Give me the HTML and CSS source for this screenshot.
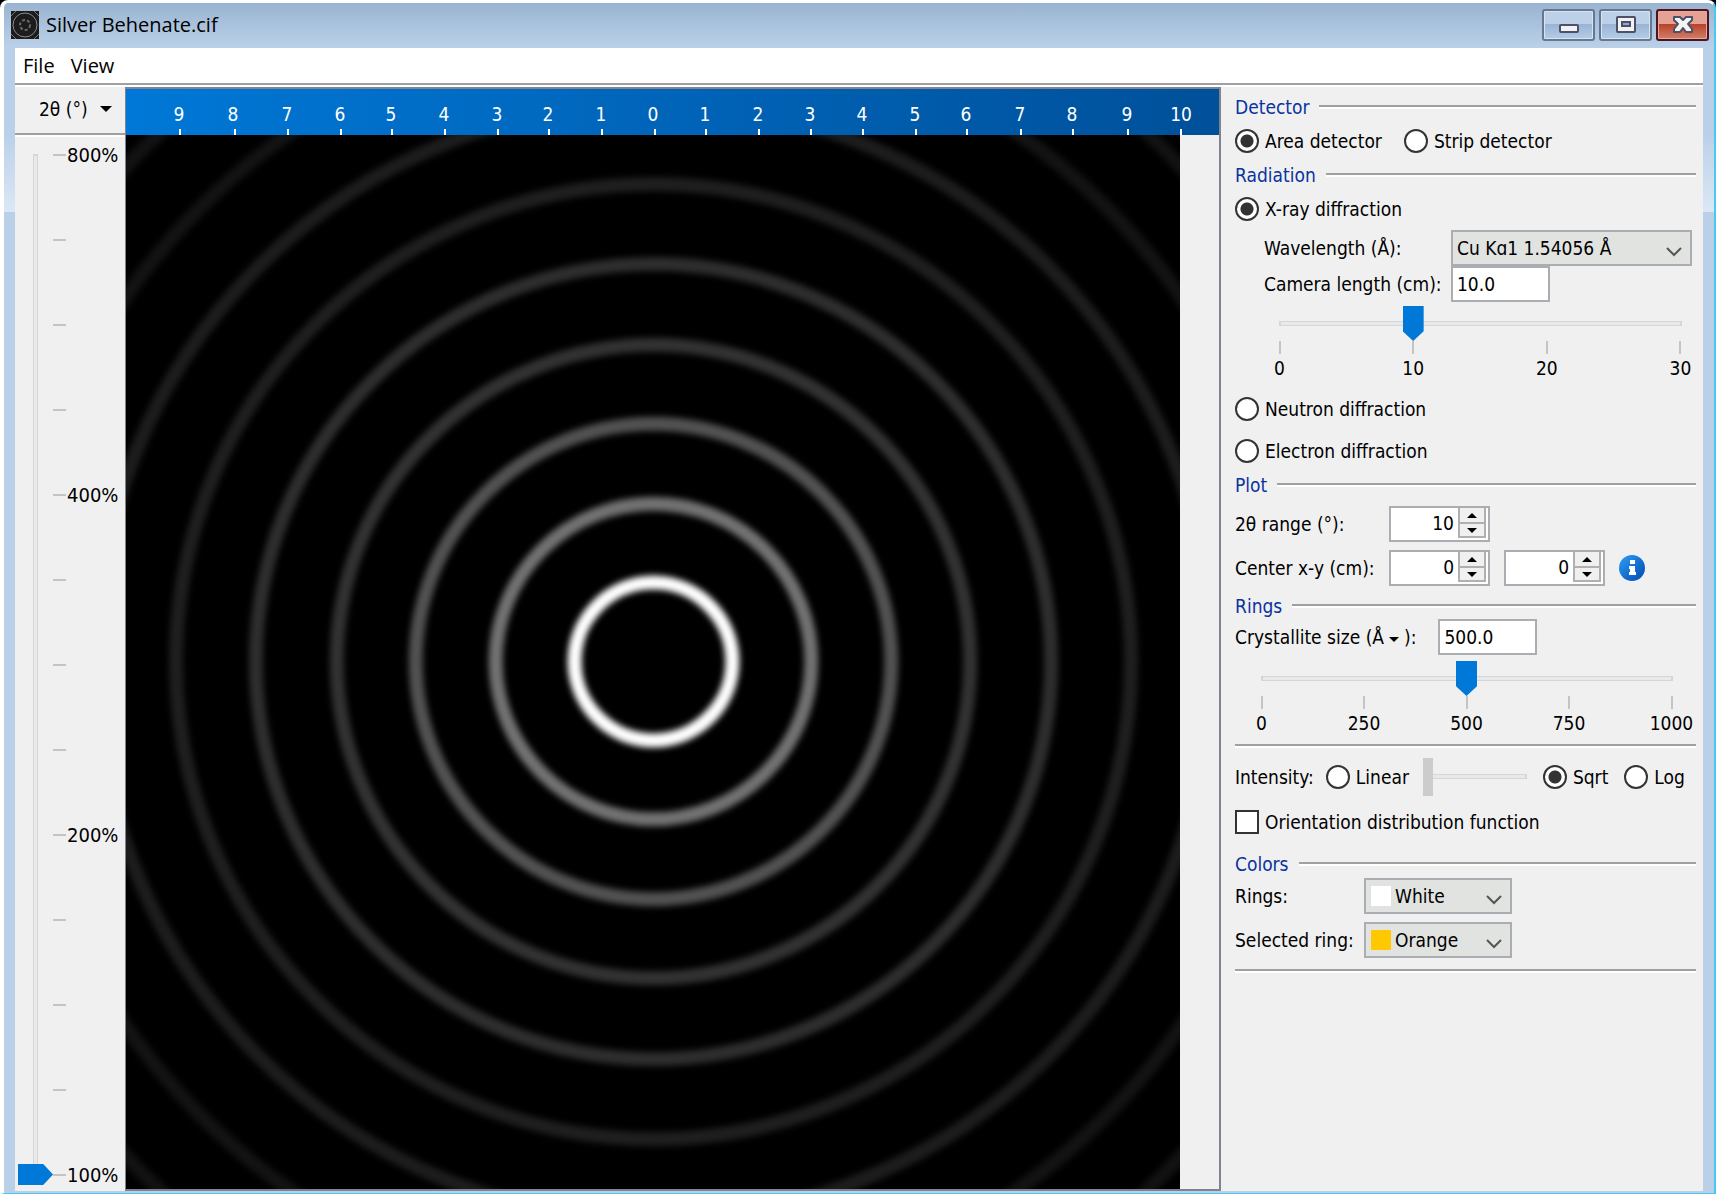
FILE: index.html
```
<!DOCTYPE html>
<html lang="en">

<head>
    <meta charset="UTF-8">
    <title>Silver Behenate.cif</title>

    <link rel="stylesheet" href="styles.css">
</head>

<body>
    <div class="window">
        <header class="titlebar">
            <svg class="app-icon" width="28" height="28" viewBox="0 0 28 28">
                <rect width="28" height="28" fill="#1c1c1c" />
                <circle cx="14" cy="14" r="12" fill="none" stroke="#8c8c8c" stroke-width="1" />
                <circle cx="14" cy="14" r="5" fill="none" stroke="#6a6a6a" stroke-width="2" stroke-dasharray="3 2" />
                <path d="M0 5L5 0M23 0L28 5M0 23L5 28M23 28L28 23" stroke="#777" />
            </svg>
            <h1>Silver Behenate.cif</h1>
            <div class="window-buttons">
                <button type="button" class="win-btn" aria-label="Minimize">
                    <svg width="20" height="18" viewBox="0 0 20 18">
                        <rect x="1" y="9" width="18" height="7" rx="1" fill="#f2f2f2" stroke="#4c5068" stroke-width="2" />
                    </svg>
                </button>
                <button type="button" class="win-btn" aria-label="Maximize">
                    <svg width="20" height="18" viewBox="0 0 20 18">
                        <rect x="1" y="1" width="18" height="15" rx="1" fill="#f2f2f2" stroke="#4c5068" stroke-width="2" />
                        <rect x="6" y="6" width="8" height="4" fill="#8fa9cc" stroke="#4c5068" stroke-width="2" />
                    </svg>
                </button>
                <button type="button" class="win-btn close" aria-label="Close">
                    <svg width="20" height="18" viewBox="0 0 20 18">
                        <path d="M1 1h6l3 3 3-3h6v3l-4 4 4 5v3h-6l-3-4-3 4H1v-3l4-5-4-4z" fill="#f4f4f4" stroke="#4c5068" stroke-width="2" stroke-linejoin="round" />
                    </svg>
                </button>
            </div>
        </header>

        <nav class="menubar">
            <button type="button">File</button>
            <button type="button">View</button>
        </nav>

        <main class="content">
            <div class="zoom-panel">
                <button type="button" class="units">2θ (°) <i class="arrow-down"></i></button>
                <div class="zoom-slider">
                    <input type="range" class="vertical" min="0" max="12" value="0" aria-label="Zoom">
                    <div class="zoom-scale">
                        <span>800%</span>
                        <span></span>
                        <span></span>
                        <span></span>
                        <span>400%</span>
                        <span></span>
                        <span></span>
                        <span></span>
                        <span>200%</span>
                        <span></span>
                        <span></span>
                        <span></span>
                        <span>100%</span>
                    </div>
                </div>
            </div>

            <section class="plot">
                <svg class="axis" width="100%" height="46">
                    <path d="M54 40v6M109 40v6M162 40v6M215 40v6M266 40v6M319 40v6M372 40v6M423 40v6M476 40v6M529 40v6M580 40v6M633 40v6M685 40v6M737 40v6M790 40v6M841 40v6M895 40v6M947 40v6M1002 40v6M1055 40v6" stroke="#fff" stroke-width="2" />
                    <g fill="#fff" text-anchor="middle">
                        <text x="53" y="32">9</text>
                        <text x="107" y="32">8</text>
                        <text x="161" y="32">7</text>
                        <text x="214" y="32">6</text>
                        <text x="265" y="32">5</text>
                        <text x="318" y="32">4</text>
                        <text x="371" y="32">3</text>
                        <text x="422" y="32">2</text>
                        <text x="475" y="32">1</text>
                        <text x="527" y="32">0</text>
                        <text x="579" y="32">1</text>
                        <text x="632" y="32">2</text>
                        <text x="684" y="32">3</text>
                        <text x="736" y="32">4</text>
                        <text x="789" y="32">5</text>
                        <text x="840" y="32">6</text>
                        <text x="894" y="32">7</text>
                        <text x="946" y="32">8</text>
                        <text x="1001" y="32">9</text>
                        <text x="1055" y="32">10</text>
                    </g>
                </svg>
                <div class="pattern">
                    <svg viewBox="0 0 1055 1055" preserveAspectRatio="xMinYMin meet">
                        <defs>
                            <filter id="soft" filterUnits="userSpaceOnUse" x="-250" y="-250" width="1555" height="1555" color-interpolation-filters="sRGB">
                                <feGaussianBlur stdDeviation="3" />
                            </filter>
                            <clipPath id="detector-area">
                                <rect width="1055" height="1055" />
                            </clipPath>
                        </defs>
                        <rect width="1055" height="1055" fill="#000" />
                        <g clip-path="url(#detector-area)">
                            <g class="rings" fill="none" filter="url(#soft)">
                                <circle cx="528" cy="527" r="79" stroke="#fff" />
                                <circle cx="528" cy="527" r="158" stroke="#727272" />
                                <circle cx="528" cy="527" r="238" stroke="#525252" />
                                <circle cx="528" cy="527" r="317" stroke="#323232" />
                                <circle cx="528" cy="527" r="398" stroke="#2e2e2e" />
                                <circle cx="528" cy="527" r="478" stroke="#1f1f1f" />
                                <circle cx="528" cy="527" r="559" stroke="#1d1d1d" />
                                <circle cx="528" cy="527" r="642" stroke="#131313" />
                                <circle cx="528" cy="527" r="724" stroke="#121212" />
                            </g>
                        </g>
                    </svg>
                </div>
            </section>

            <form class="options">
                <h2>Detector</h2>
                <div class="row">
                    <label><input type="radio" name="detector" checked> Area detector</label>
                    <label><input type="radio" name="detector"> Strip detector</label>
                </div>

                <h2>Radiation</h2>
                <div class="row">
                    <label><input type="radio" name="radiation" checked> X-ray diffraction</label>
                </div>
                <div class="fields xray">
                    <label for="wavelength">Wavelength (Å):</label>
                    <div class="select">
                        <select id="wavelength">
                            <option>Cu Kɑ1 1.54056 Å</option>
                        </select>
                        <svg class="chevron" width="16" height="10" viewBox="0 0 16 10"><path d="M1 1l7 7 7-7" fill="none" stroke="#555" stroke-width="2" /></svg>
                    </div>
                    <label for="camera">Camera length (cm):</label>
                    <input type="text" id="camera" value="10.0">
                </div>
                <div class="slider camera-slider">
                    <input type="range" min="0" max="30" value="10" aria-label="Camera length">
                    <div class="scale"><span>0</span><span>10</span><span>20</span><span>30</span></div>
                </div>
                <div class="row">
                    <label><input type="radio" name="radiation"> Neutron diffraction</label>
                </div>
                <div class="row">
                    <label><input type="radio" name="radiation"> Electron diffraction</label>
                </div>

                <h2>Plot</h2>
                <div class="fields plot-fields">
                    <label for="range">2θ range (°):</label>
                    <div class="spinner">
                        <input type="number" id="range" value="10">
                        <button type="button" aria-label="Increase"><i class="arrow-up"></i></button>
                        <button type="button" aria-label="Decrease"><i class="arrow-down"></i></button>
                    </div>
                    <label for="center-x">Center x-y (cm):</label>
                    <div class="center">
                        <div class="spinner">
                            <input type="number" id="center-x" value="0">
                            <button type="button" aria-label="Increase"><i class="arrow-up"></i></button>
                            <button type="button" aria-label="Decrease"><i class="arrow-down"></i></button>
                        </div>
                        <div class="spinner">
                            <input type="number" value="0" aria-label="Center y">
                            <button type="button" aria-label="Increase"><i class="arrow-up"></i></button>
                            <button type="button" aria-label="Decrease"><i class="arrow-down"></i></button>
                        </div>
                        <svg class="info" width="26" height="26" viewBox="0 0 26 26">
                            <defs>
                                <linearGradient id="info-fill" x1="0" y1="0" x2="1" y2="1">
                                    <stop offset="0" stop-color="#2ba0f5" />
                                    <stop offset="1" stop-color="#0347b0" />
                                </linearGradient>
                            </defs>
                            <circle cx="13" cy="13" r="13" fill="url(#info-fill)" />
                            <path d="M11 5h5v4h-5zM10 11h6v6h1v3h-7v-3h1v-3h-1z" fill="#fff" />
                        </svg>
                    </div>
                </div>

                <h2>Rings</h2>
                <div class="row size-row">
                    <label for="size">Crystallite size (Å<i class="arrow-down"></i>):</label>
                    <input type="text" id="size" value="500.0">
                </div>
                <div class="slider size-slider">
                    <input type="range" min="0" max="1000" value="500" aria-label="Crystallite size">
                    <div class="scale"><span>0</span><span>250</span><span>500</span><span>750</span><span>1000</span></div>
                </div>
                <hr>

                <div class="row intensity">
                    <span>Intensity:</span>
                    <label><input type="radio" name="intensity"> Linear</label>
                    <input type="range" class="disabled" value="0" disabled aria-label="Linear intensity">
                    <label><input type="radio" name="intensity" checked> Sqrt</label>
                    <label><input type="radio" name="intensity"> Log</label>
                </div>
                <div class="row odf">
                    <label><input type="checkbox"> Orientation distribution function</label>
                </div>

                <h2>Colors</h2>
                <div class="fields colors">
                    <label for="ring-color">Rings:</label>
                    <div class="select">
                        <span class="swatch white"></span>
                        <select id="ring-color">
                            <option>White</option>
                        </select>
                        <svg class="chevron" width="16" height="10" viewBox="0 0 16 10"><path d="M1 1l7 7 7-7" fill="none" stroke="#555" stroke-width="2" /></svg>
                    </div>
                    <label for="selected-color">Selected ring:</label>
                    <div class="select">
                        <span class="swatch orange"></span>
                        <select id="selected-color">
                            <option>Orange</option>
                        </select>
                        <svg class="chevron" width="16" height="10" viewBox="0 0 16 10"><path d="M1 1l7 7 7-7" fill="none" stroke="#555" stroke-width="2" /></svg>
                    </div>
                </div>
                <hr>
            </form>
        </main>
    </div>
</body>

</html>
```
FILE: styles.css
```
* {
    box-sizing: border-box;
}

body {
    margin: 0;
    background-color: #000;
    font-family: "DejaVu Sans Condensed", "DejaVu Sans", sans-serif;
    font-size: 19px;
    line-height: 24px;
    color: #000;
}

button,
input,
select {
    font: inherit;
    color: inherit;
    margin: 0;
}

button {
    border: none;
    background: none;
    padding: 0;
}

/* window frame */
.window {
    display: flex;
    flex-direction: column;
    height: 100vh;
    padding: 0 11px 2px 11px;
    border-style: solid;
    border-width: 3px 2px 1px 4px;
    border-color: #fff #4cc8ee #4cc8ee #fff;
    border-radius: 8px 8px 0 0;
    background: linear-gradient(#99b4d1, #bad0e8 44px, #bad0e8 130px, #dbe7f5 209px, #bad0e8 209px);
}

.titlebar {
    display: flex;
    flex: none;
    align-items: center;
    height: 45px;
    padding-bottom: 2px;
    margin: 0 -6px 0 -4px;
}

.titlebar h1 {
    flex: 1;
    margin: 0 7px;
    font-family: "Open Sans", sans-serif;
    font-size: 20px;
    font-weight: normal;
}

.window-buttons {
    display: flex;
    gap: 4px;
}

.win-btn {
    display: flex;
    align-items: center;
    justify-content: center;
    width: 53px;
    height: 32px;
    border: 2px solid #66788f;
    border-radius: 3px;
    box-shadow: inset 0 0 0 1px #d6e4f4;
    background: linear-gradient(#bcd0e8 45%, #98b4d4 45%, #b4cce6);
}

.win-btn.close {
    border-color: #4a1420;
    box-shadow: inset 0 0 0 1px #e8a89c;
    background: linear-gradient(#e4a194 45%, #b93f27 45%, #d0806a);
}

/* menu */
.menubar {
    display: flex;
    flex: none;
    gap: 16px;
    height: 39px;
    padding: 0 8px 2px;
    border-bottom: 2px solid #fff;
    box-shadow: inset 0 -2px #a0a0a0;
    background-color: #fff;
    font-family: "Open Sans", sans-serif;
    font-size: 20px;
}

.content {
    display: flex;
    flex: 1;
    min-height: 0;
    background-color: #f0f0f0;
}

/* left panel */
.zoom-panel {
    display: flex;
    flex-direction: column;
    width: 110px;
}

.units {
    display: flex;
    align-items: center;
    gap: 12px;
    height: 50px;
    padding: 0 0 4px 24px;
    border-bottom: 2px solid #fff;
    box-shadow: inset 0 -2px #a0a0a0;
}

.arrow-down,
.arrow-up {
    display: inline-block;
    border: 5px solid transparent;
    border-top: 5px solid #000;
    border-bottom: none;
}

.arrow-up {
    border-top: none;
    border-bottom: 5px solid #000;
}

.units .arrow-down {
    border-width: 6px 6px 0;
}

.zoom-slider {
    display: flex;
    flex: 1;
    min-height: 0;
    padding: 7px 3px 6px;
}

.zoom-scale {
    display: flex;
    flex-direction: column;
    justify-content: space-between;
    margin: 10px 0;
    font-size: 20px;
}

.zoom-scale span {
    display: flex;
    align-items: center;
    height: 1px;
}

.zoom-scale span::before {
    content: "";
    width: 13px;
    height: 2px;
    margin-right: 1px;
    background-color: #c4c4c4;
}

/* sliders */
input[type="range"] {
    appearance: none;
    display: block;
    height: 35px;
    background: none;
}

input[type="range"]::-webkit-slider-runnable-track {
    height: 35px;
    background:
        linear-gradient(#e7eaea, #e7eaea) center / calc(100% - 23px) 3px no-repeat,
        linear-gradient(#d6d6d6, #d6d6d6) center / calc(100% - 19px) 5px no-repeat;
}

input[type="range"]::-webkit-slider-thumb {
    appearance: none;
    width: 21px;
    height: 35px;
    background-color: #0078d7;
    clip-path: polygon(0 0, 100% 0, 100% 72%, 50% 100%, 0 72%);
}

input.vertical {
    writing-mode: vertical-lr;
    direction: rtl;
    width: 35px;
    height: 100%;
}

input.vertical::-webkit-slider-runnable-track {
    width: 35px;
    height: auto;
    background:
        linear-gradient(#e7eaea, #e7eaea) center / 3px calc(100% - 23px) no-repeat,
        linear-gradient(#d6d6d6, #d6d6d6) center / 5px calc(100% - 19px) no-repeat;
}

input.vertical::-webkit-slider-thumb {
    width: 35px;
    height: 21px;
    clip-path: polygon(0 0, 72% 0, 100% 50%, 72% 100%, 0 100%);
}

input.disabled {
    width: 104px;
    height: 38px;
}

input.disabled::-webkit-slider-runnable-track {
    height: 38px;
    background:
        linear-gradient(#e7eaea, #e7eaea) center / calc(100% - 4px) 3px no-repeat,
        linear-gradient(#d6d6d6, #d6d6d6) center / 100% 5px no-repeat;
}

input.disabled::-webkit-slider-thumb {
    width: 10px;
    height: 38px;
    background-color: #ccc;
    clip-path: none;
}

.slider input {
    width: 100%;
}

.scale {
    display: flex;
    justify-content: space-between;
    margin: 0 10px;
}

.scale span {
    display: flex;
    flex-direction: column;
    align-items: center;
    width: 1px;
}

.scale span::before {
    content: "";
    flex: none;
    width: 2px;
    height: 13px;
    margin-bottom: 2px;
    background-color: #c4c4c4;
}

/* diffraction pattern */
.plot {
    display: flex;
    flex: 1;
    flex-direction: column;
    min-width: 0;
    border: 2px solid #7f8490;
    border-left-width: 1px;
}

.axis {
    flex: none;
    background: linear-gradient(to right, #0078d7, #00509a);
    font-size: 19px;
}

.pattern {
    flex: 1;
    min-height: 0;
}

.pattern svg {
    display: block;
    width: 100%;
    height: 100%;
}

.rings circle {
    stroke-width: 14px;
}

/* right panel */
.options {
    width: 482px;
    padding: 7px 7px 0 14px;
}

.options h2 {
    display: flex;
    align-items: center;
    gap: 10px;
    height: 26px;
    margin: 0;
    font-size: 19px;
    font-weight: normal;
    color: #0a32a0;
}

.options h2::after {
    content: "";
    flex: 1;
    border-top: 2px solid #a0a0a0;
    border-bottom: 2px solid #fff;
}

hr {
    height: 4px;
    margin: 0;
    border: none;
    border-top: 2px solid #a0a0a0;
    border-bottom: 2px solid #fff;
}

.row {
    display: flex;
    align-items: center;
    gap: 22px;
    height: 42px;
}

.row label {
    display: flex;
    align-items: center;
    gap: 6px;
}

input[type="radio"],
input[type="checkbox"] {
    appearance: none;
    flex: none;
    width: 24px;
    height: 24px;
    border: 2px solid #333;
    background-color: #fff;
}

input[type="radio"] {
    border-radius: 50%;
}

input[type="radio"]:checked {
    background: radial-gradient(circle, #333 6px, #fff 7px);
}

input[type="text"],
.spinner {
    width: 99px;
    height: 36px;
    border: 2px solid #abadb3;
    background-color: #fff;
}

input[type="text"] {
    padding: 0 4px;
}

.fields {
    display: grid;
    align-items: center;
}

.xray {
    grid-template-columns: 187px 1fr;
    padding: 0 4px 0 29px;
}

.select {
    position: relative;
}

.select select {
    appearance: none;
    display: block;
    width: 100%;
    height: 36px;
    padding: 0 4px;
    border: 2px solid #abadb3;
    border-radius: 0;
    background-color: #e1e3e1;
}

.chevron {
    position: absolute;
    right: 10px;
    top: 17px;
    pointer-events: none;
}

.camera-slider {
    height: 86px;
    padding: 4px 5px 0 34px;
}

.plot-fields {
    grid-template-columns: 154px 1fr;
    row-gap: 8px;
    padding: 8px 0 7px;
}

.spinner {
    display: grid;
    grid-template-columns: 1fr 28px;
    grid-template-rows: 16px 14px;
    width: 101px;
    padding: 0 2px 0 0;
}

.spinner input {
    appearance: textfield;
    grid-row: 1 / 3;
    width: 100%;
    border: none;
    padding: 0 4px;
    background: none;
    text-align: right;
}

.spinner input::-webkit-inner-spin-button {
    appearance: none;
}

.spinner button {
    display: flex;
    align-items: center;
    justify-content: center;
    border: 2px solid #b0b0b0;
    border-top: none;
    background-color: #f0f0f0;
}

.center {
    display: flex;
    align-items: center;
    gap: 14px;
}

.size-row {
    height: 36px;
}

.size-row label {
    gap: 7px;
}

.size-row .arrow-down {
    margin: 4px -2px 0;
}

.size-slider {
    height: 89px;
    padding: 6px 14px 0 16px;
}

.intensity {
    gap: 10px;
    height: 57px;
}

.intensity span {
    margin-right: 2px;
}

.intensity input[type="range"] {
    margin: 0 6px 0 4px;
}

.intensity label:last-child {
    margin-left: 6px;
}

.odf {
    height: 34px;
    margin-bottom: 12px;
}

.colors {
    grid-template-columns: 129px 148px;
    row-gap: 8px;
    padding: 1px 0 11px;
}

.swatch {
    position: absolute;
    left: 7px;
    top: 8px;
    width: 20px;
    height: 20px;
}

.white {
    background-color: #fff;
}

.orange {
    background-color: #ffc800;
}

.colors select {
    padding-left: 29px;
}
```
